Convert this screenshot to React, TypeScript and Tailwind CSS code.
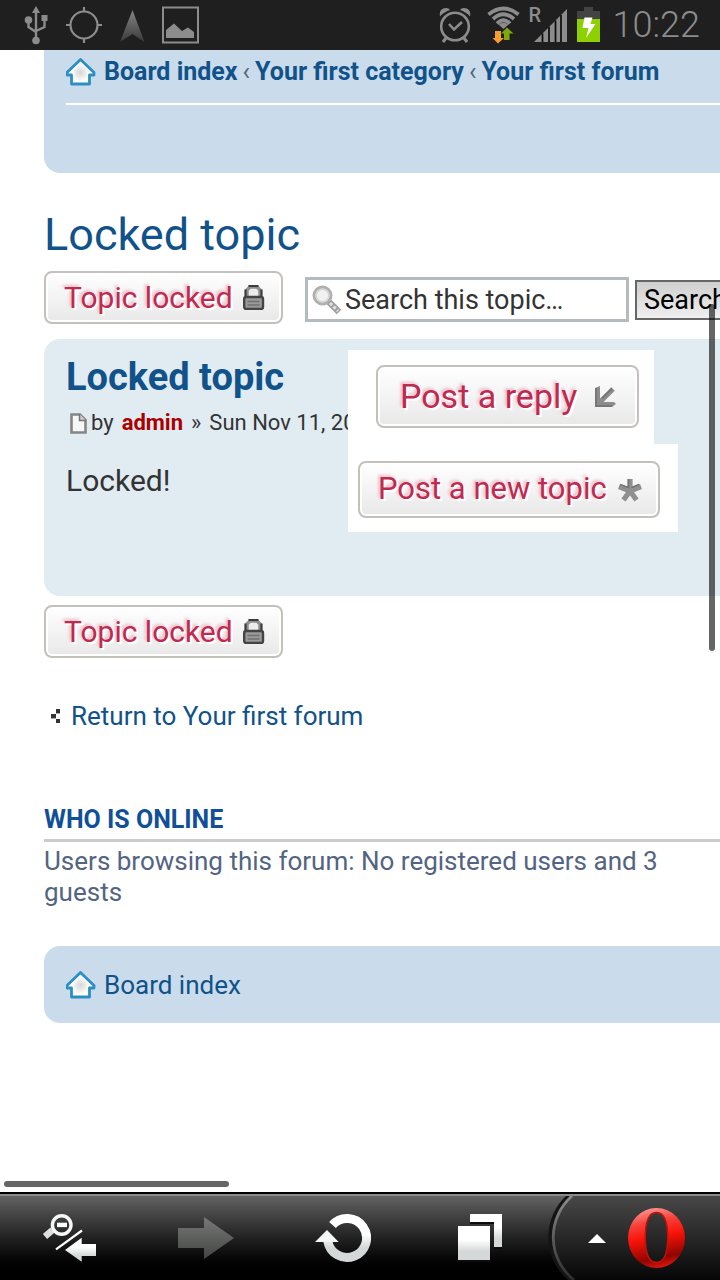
import type { ReactNode } from "react";

const CRUMBS = ["Board index", "Your first category", "Your first forum"];

function HomeIcon() {
  return (
    <svg width="30" height="28" viewBox="0 0 30 28" className="shrink-0" aria-hidden="true">
      <defs>
        <radialGradient id="home" cx="0.5" cy="0.5" r="0.5">
          <stop offset="0" stopColor="#d6d6d6" />
          <stop offset="1" stopColor="#ffffff" />
        </radialGradient>
      </defs>
      <path
        d="M14.500 1.500L28 14.500V17H23.500V26H5.500V17H1V14.500Z"
        fill="#fff"
        stroke="#2a8fc2"
        strokeWidth="2.800"
        strokeLinejoin="round"
      />
      <path d="M14.500 5L24 14.500H21V23.500H8V14.500H5Z" fill="url(#home)" />
    </svg>
  );
}

function LockIcon() {
  return (
    <svg width="22" height="25" viewBox="0 0 22 25" className="shrink-0" aria-hidden="true">
      <path d="M4 13V5L7 2H14L17 5V13Z" fill="#ededed" stroke="#8f8f8f" strokeWidth="3.500" />
      <path d="M2.500 12V4.500M18.500 12V4.500M5.500 1H15.500" stroke="#3c3c3c" strokeWidth="2.200" />
      <rect x="1.200" y="12" width="18.800" height="12" rx="2" fill="#9a9a9a" stroke="#444" strokeWidth="2.400" />
      <path d="M4.500 16.500H16.500M4.500 20H16.500" stroke="#707070" strokeWidth="1.400" />
    </svg>
  );
}

function ReplyIcon() {
  return (
    <svg width="22" height="22" viewBox="0 0 22 22" className="shrink-0" aria-hidden="true">
      <path d="M4 17L18 3" stroke="#8c8c8c" strokeWidth="5" />
      <path d="M0 2L5 0V16H19L21 18L17 21H0Z" fill="#8c8c8c" />
      <path d="M1 2V20H17M7 12.500L17 2.500" fill="none" stroke="#707070" strokeWidth="1.500" />
    </svg>
  );
}

function StarIcon() {
  return (
    <svg width="24" height="24" viewBox="0 0 24 24" className="shrink-0" aria-hidden="true">
      <path
        d="M12 13V1M12 13L1 8.500M12 13L23 8.500M12 13L5.500 22M12 13L18.500 22"
        stroke="#909090"
        strokeWidth="5.200"
      />
      <path d="M10.500 1V9.500L2 6.500M13.500 9.500L21 6.500" fill="none" stroke="#727272" strokeWidth="1.500" />
    </svg>
  );
}

function ForumButton({ className, icon, children }: { className: string; icon: ReactNode; children: ReactNode }) {
  return (
    <button
      type="button"
      className={`flex shrink-0 items-center justify-between rounded-lg border-2 border-[#c4c1bc] bg-linear-to-b from-white to-[#e8e8e8] whitespace-nowrap text-[#bf2a50] shadow-[inset_0_0_0_2px_#fff] [text-shadow:2px_2px_0_#fff,-2px_-2px_3px_#ecb9c7] ${className}`}
    >
      {children}
      {icon}
    </button>
  );
}

function LockedButton() {
  return (
    <ForumButton className="h-[53px] w-[239px] pr-4 pl-[18px] text-[30px]" icon={<LockIcon />}>
      Topic locked
    </ForumButton>
  );
}

function StatusBar() {
  return (
    <header className="flex h-[50px] shrink-0 items-center justify-between bg-[#1f1f1f] pr-5 pl-6 text-[#8c8c8c]">
      <div className="flex items-center gap-[18px]">
        <svg width="24" height="40" viewBox="0 0 24 40" fill="none" stroke="currentColor" strokeWidth="2.400" aria-label="USB">
          <path d="M12 6V34M4.500 15V22L12 27M20.500 13V22L12 26" />
          <path d="M12 1L16 8H8ZM17.500 10H23.500V16H17.500Z" fill="currentColor" stroke="none" />
          <circle cx="4.500" cy="15" r="3.800" fill="currentColor" stroke="none" />
          <circle cx="12" cy="35.500" r="3.800" fill="currentColor" stroke="none" />
        </svg>
        <svg width="36" height="40" viewBox="0 0 36 40" fill="none" stroke="currentColor" strokeWidth="2.200" aria-label="GPS">
          <circle cx="18" cy="20" r="13.500" />
          <path d="M18 2V7M18 33V38M0 20H5M31 20H36" />
        </svg>
        <svg width="24" height="40" viewBox="0 0 24 40" aria-label="Navigation">
          <defs>
            <linearGradient id="nav" x1="0" y1="0" x2="0" y2="1">
              <stop offset="0" stopColor="#858585" />
              <stop offset="1" stopColor="#3a3a3a" />
            </linearGradient>
          </defs>
          <path d="M12.500 5L24.500 37L12.500 29L0 37Z" fill="url(#nav)" />
        </svg>
        <svg width="38" height="40" viewBox="0 0 38 40" aria-label="Picture">
          <rect x="1" y="2.500" width="35" height="35" fill="none" stroke="currentColor" strokeWidth="2" />
          <path d="M4 33V25L12 18.500L20 26L26 22.500L32 27V33Z" fill="currentColor" />
        </svg>
      </div>
      <div className="flex items-center gap-2">
        <svg width="40" height="40" viewBox="0 0 40 40" fill="none" stroke="currentColor" strokeWidth="2.600" aria-label="Alarm">
          <circle cx="16" cy="21.500" r="13.800" />
          <path d="M10 19L15 24.500L23 17" />
          <path d="M1 11.500Q-0.500 3.500 7 3Q10 3 11 5Q4 7.500 1 11.500ZM31 11.500Q32.500 3.500 25 3Q22 3 21 5Q28 7.500 31 11.500Z" fill="currentColor" stroke="none" />
          <path d="M7 33L4 37M25 33L28 37" strokeWidth="3" />
        </svg>
        <svg width="34" height="40" viewBox="0 0 34 40" fill="none" stroke="currentColor" strokeWidth="3.800" aria-label="Wi-Fi">
          <path d="M1.500 9.500Q16.500 -2.500 31.500 9.500M6 14Q16.500 4.500 27 14M10 18.500Q16.500 12 23 18.500" />
          <path d="M11.500 19.500Q16.500 16 21.500 19.500L16.500 24Z" fill="currentColor" stroke="none" />
          <path d="M8 26H14V33H17L11 38.500L5.500 33H8Z" fill="#f79c30" stroke="none" />
          <path d="M17 35H22.500V28.500H26.500L20 22.500L14 28.500H17Z" fill="#7da90c" stroke="none" />
        </svg>
        <div className="relative">
          <span className="absolute top-0 left-0 text-xl leading-5 font-medium">R</span>
          <svg width="40" height="40" viewBox="0 0 40 40" aria-label="Signal">
            <path d="M5 37L38 4V37Z" fill="currentColor" />
            <path d="M13.500 28.500V37M20 22V37M26.500 15.500V37M32 10V37" stroke="#0b0b0b" strokeWidth="1.700" />
          </svg>
        </div>
        <svg width="28" height="40" viewBox="0 0 28 40" aria-label="Battery charging">
          <path d="M7 2H16V6H23V15H0V6H7Z" fill="#434343" />
          <rect y="14" width="23" height="23" fill="#8fd000" />
          <path d="M7.500 12.500H15.500L13.500 19H18.500L9 33L11.500 23H5.500Z" fill="#fff" />
        </svg>
        <time className="text-[36px] leading-[50px] font-light">10:22</time>
      </div>
    </header>
  );
}

function NavBar() {
  return (
    <div className="h-[123px] rounded-bl-2xl bg-[#cadceb] pt-2 pl-[22px]">
      <nav aria-label="Breadcrumb" className="flex h-[47px] border-b-2 border-white">
        <HomeIcon />
        <ol className="flex pl-2 text-[25px] leading-7 whitespace-nowrap">
          {CRUMBS.map((crumb, i) => (
            <li key={crumb}>
              {i > 0 && <span className="px-[5px] text-[#536482]">‹</span>}
              <a href="#" className="font-bold text-[#105289]">
                {crumb}
              </a>
            </li>
          ))}
        </ol>
      </nav>
    </div>
  );
}

function SearchForm() {
  return (
    <form className="flex shrink-0 items-center gap-1.5 pt-1" onSubmit={(e) => e.preventDefault()}>
      <div className="flex h-[45px] w-[324px] items-center border-3 border-[#b4bac0] bg-white pl-1">
        <svg width="30" height="30" viewBox="0 0 30 30" className="shrink-0" aria-hidden="true">
          <circle cx="10.500" cy="10.500" r="8.500" fill="#f1f1f1" stroke="#b0b0b0" strokeWidth="3" />
          <circle cx="10.500" cy="10.500" r="6.300" fill="none" stroke="#d5d5d5" strokeWidth="1.500" />
          <path d="M17 17L27 27" stroke="#a0a0a0" strokeWidth="6.500" />
          <path d="M18 18L26 26" stroke="#e2e2e2" strokeWidth="3" strokeDasharray="3 2" />
        </svg>
        <input
          type="text"
          aria-label="Search this topic"
          defaultValue="Search this topic…"
          className="h-full min-w-0 flex-1 pl-[3px] text-[27px] text-[#333] outline-none"
        />
      </div>
      <button
        type="submit"
        className="h-10 border-2 border-[#666] bg-linear-to-b from-[#cfcfcf] to-[#efefef] px-[7px] text-[27px] leading-9 text-black"
      >
        Search
      </button>
    </form>
  );
}

function Post() {
  return (
    <article className="relative h-[257px] rounded-l-2xl bg-[#e1ebf2] pt-[14px] pl-[22px] text-[#333]">
      <h3 className="text-[38px] leading-[48px] font-bold text-[#105289]">
        <a href="#">Locked topic</a>
      </h3>
      <p className="flex items-center gap-2 pt-2 pl-[3px] text-[22px] leading-7 whitespace-nowrap">
        <span className="flex items-center gap-1">
          <svg width="18" height="21" viewBox="0 0 18 21" className="shrink-0" aria-hidden="true">
            <path d="M2.500 1.500H11L16.500 7V19.500H2.500Z" fill="#f7f7f7" stroke="#858585" strokeWidth="2.600" />
            <path d="M10.500 1V7.500H17" fill="#ccc" stroke="#777" strokeWidth="1.500" />
          </svg>
          by
        </span>
        <a href="#" className="font-bold text-[#aa0000]">
          admin
        </a>
        <span>»</span>
        <span>Sun Nov 11, 2012</span>
      </p>
      <p className="pt-[26px] text-[30px] leading-9">Locked!</p>

      <div className="absolute top-[11px] left-[304px] flex flex-col items-start">
        <div className="bg-white pt-[15px] pr-[15px] pb-4 pl-7">
          <ForumButton className="h-[63px] w-[263px] pr-5 pl-[22px] text-[34px]" icon={<ReplyIcon />}>
            Post a reply
          </ForumButton>
        </div>
        <div className="bg-white pt-[17px] pr-[18px] pb-[14px] pl-2.5">
          <ForumButton className="h-[57px] w-[302px] pr-4 pl-[18px] text-[31px]" icon={<StarIcon />}>
            Post a new topic
          </ForumButton>
        </div>
      </div>
    </article>
  );
}

function Toolbar() {
  return (
    <footer className="shrink-0 border-t-2 border-black">
      <div className="flex h-[86px] border-t-2 border-[#8a8a8a] bg-linear-to-b from-[#636363] to-black">
        <svg width="0" height="0" className="absolute" aria-hidden="true">
          <linearGradient id="chrome" x1="0" y1="0" x2="0" y2="1">
            <stop offset="0.400" stopColor="#ffffff" />
            <stop offset="0.750" stopColor="#d5d8d8" />
          </linearGradient>
          <linearGradient id="dim" x1="0" y1="0" x2="0" y2="1">
            <stop offset="0" stopColor="#777877" />
            <stop offset="1" stopColor="#434543" />
          </linearGradient>
        </svg>
        <button type="button" aria-label="Zoom out" className="flex flex-1 items-center justify-center">
          <svg width="54" height="50" viewBox="0 0 54 50" fill="none">
            <path d="M10.500 17L3 23.500" stroke="#dcdfdf" strokeWidth="6.500" />
            <circle cx="19.700" cy="12" r="9.300" stroke="#f6f7f7" strokeWidth="3.400" />
            <rect x="15" y="9.700" width="10" height="4.400" fill="#fff" />
            <path d="M14 36.300L40 17.500" stroke="#fff" strokeWidth="2.200" />
            <path d="M23 37L39.700 24.700V31H54V43H39.700V48.700Z" fill="url(#chrome)" />
          </svg>
        </button>
        <button type="button" aria-label="Forward" className="flex flex-1 items-center justify-center">
          <svg width="56" height="42" viewBox="0 0 56 42">
            <path d="M0 11H26V0L56 21L26 42V31H0Z" fill="url(#dim)" />
          </svg>
        </button>
        <button type="button" aria-label="Reload" className="flex flex-1 items-center justify-center">
          <svg width="56" height="50" viewBox="0 0 56 50">
            <path d="M17.500 12A19.500 19.500 0 1 1 12.800 28" fill="none" stroke="url(#chrome)" strokeWidth="9" />
            <path d="M0 29L12 17L23.700 29Z" fill="#f4f5f5" />
          </svg>
        </button>
        <button type="button" aria-label="Tabs" className="flex flex-1 items-center justify-center">
          <svg width="44" height="48" viewBox="0 0 44 48">
            <path d="M12 8H36V10H12ZM36 33H44V35H36ZM0 46H32V48H0Z" fill="#0c0c0c" />
            <path d="M12 0H44V33H36V8H12Z" fill="url(#chrome)" />
            <path d="M0 12H32V46H0Z" fill="url(#chrome)" />
          </svg>
        </button>
        <button type="button" aria-label="Opera menu" className="w-[172px]">
          <svg width="172" height="84" viewBox="0 0 172 84">
            <defs>
              <linearGradient id="menu" x1="0" y1="0" x2="0" y2="1">
                <stop offset="0" stopColor="#484848" />
                <stop offset="1" stopColor="#060606" />
              </linearGradient>
              <linearGradient id="rim" x1="0" y1="0" x2="0" y2="1">
                <stop offset="0" stopColor="#8d8d8d" />
                <stop offset="1" stopColor="#2c2c2c" />
              </linearGradient>
              <linearGradient id="opera" x1="0.300" y1="0" x2="0.500" y2="1">
                <stop offset="0" stopColor="#ff9a96" />
                <stop offset="0.250" stopColor="#f8403a" />
                <stop offset="0.500" stopColor="#f81308" />
                <stop offset="0.850" stopColor="#8f0500" />
                <stop offset="1" stopColor="#d81510" />
              </linearGradient>
            </defs>
            <path d="M21 0A54.600 54.600 0 0 0 23 84" fill="none" stroke="#141414" strokeWidth="4" />
            <path d="M24 0A54.600 54.600 0 0 0 26 84H172V0Z" fill="url(#menu)" />
            <path d="M24 0A54.600 54.600 0 0 0 26 84" fill="none" stroke="url(#rim)" strokeWidth="2.800" />
            <path d="M40 47L49 38L58 47Z" fill="#fff" />
            <path
              d="M108.500 12A28.500 30 0 0 1 108.500 72A28.500 30 0 0 1 108.500 12ZM108.500 16.500C100 16.500 97.300 27 97.300 41.500C97.300 56 100 66.500 108.500 66.500C117 66.500 119.700 56 119.700 41.500C119.700 27 117 16.500 108.500 16.500Z"
              fill="url(#opera)"
              fillRule="evenodd"
            />
            <path
              d="M108.500 16.500C100 16.500 97.300 27 97.300 41.500C97.300 56 100 66.500 108.500 66.500C117 66.500 119.700 56 119.700 41.500C119.700 27 117 16.500 108.500 16.500Z"
              fill="none"
              stroke="#c0120c"
              strokeWidth="1.500"
            />
          </svg>
        </button>
      </div>
    </footer>
  );
}

export default function App() {
  return (
    <div className="flex min-h-screen flex-col bg-white font-['Roboto',sans-serif]">
      <StatusBar />
      <main className="relative flex-1 overflow-hidden pl-11">
        <NavBar />
        <h2 className="pt-9 text-[45px] leading-[52px] text-[#105289]">
          <a href="#">Locked topic</a>
        </h2>
        <div className="flex items-center gap-[22px] pt-2.5 pb-[15px]">
          <LockedButton />
          <SearchForm />
        </div>
        <Post />
        <div className="pt-[9px]">
          <LockedButton />
        </div>
        <a href="#" className="flex items-center pt-11 pl-[7px] text-[26px] leading-7 text-[#105289]">
          <svg width="10" height="14" viewBox="0 0 10 14" className="mr-2.5" aria-hidden="true">
            <path d="M5 0H9V4H5ZM0 5H5V9H0ZM5 10H9V14H5Z" fill="#333" />
            <path d="M0 9H5V10H0ZM5 4H9V5H5Z" fill="#aaa" />
          </svg>
          Return to Your first forum
        </a>
        <h3 className="mt-[76px] border-b-3 border-[#ccc] pb-[5px] text-[25px] leading-7 font-bold text-[#115098]">
          WHO IS ONLINE
        </h3>
        <p className="pt-1 pr-11 text-[26px] leading-[31px] text-[#536482]">
          Users browsing this forum: No registered users and 3 guests
        </p>
        <div className="mt-[38px] flex h-[77px] items-center rounded-l-2xl bg-[#cadceb] pl-[22px]">
          <HomeIcon />
          <a href="#" className="pl-2 text-[26px] leading-7 text-[#105289]">
            Board index
          </a>
        </div>
        <div className="absolute top-[254px] right-[5px] h-[347px] w-1.5 rounded-full bg-black/60" />
        <div className="absolute bottom-[5px] left-1 h-1.5 w-[225px] rounded-full bg-black/60" />
      </main>
      <Toolbar />
    </div>
  );
}
